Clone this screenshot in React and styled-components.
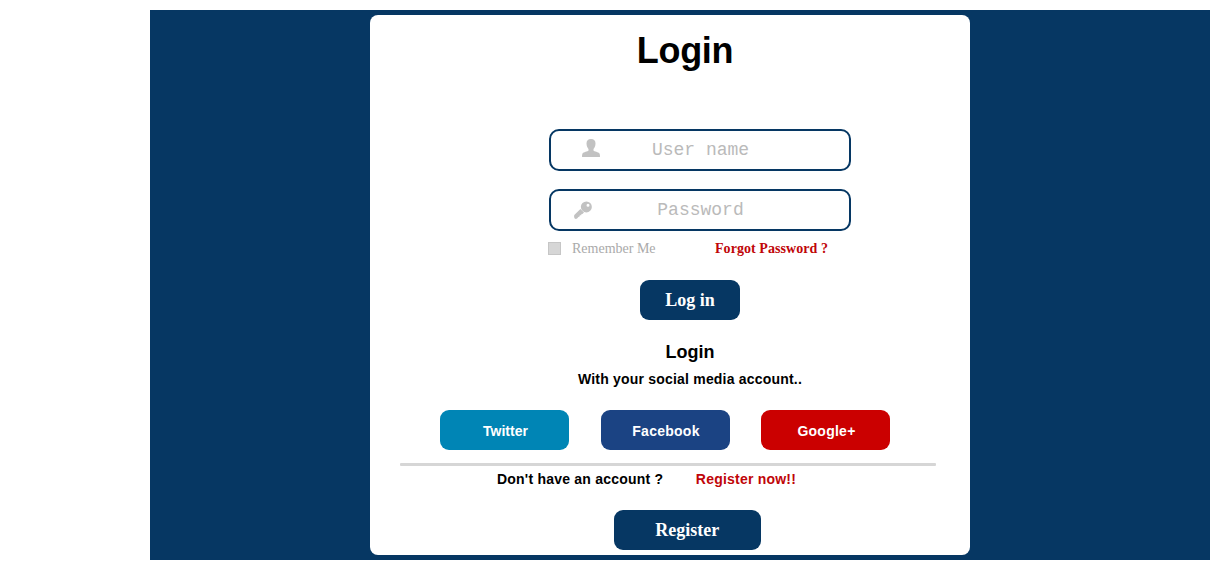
import React from 'react';
import styled, { createGlobalStyle } from 'styled-components';

const GlobalStyle = createGlobalStyle`
  *, *::before, *::after { box-sizing: border-box; }
  body { margin: 0; background: #fff; overflow: hidden; }
`;
const sans = '"Liberation Sans", Arial, sans-serif';
const serif = '"Liberation Serif", "Times New Roman", serif';
const mono = '"Liberation Mono", "Courier New", monospace';
const navy = '#063763';

const Page = styled.div`
  height: 580px;
  padding: 10px 20px 20px 150px;
`;
const Backdrop = styled.main`
  height: 550px;
  padding: 5px 240px 5px 220px;
  background: ${navy};
`;
const Card = styled.section`
  width: 600px;
  height: 540px;
  border-radius: 8px;
  background: #fff;
  display: flex;
  flex-direction: column;
`;
const Title = styled.h1`
  margin: 15px 0 0 30px;
  height: 99px;
  font: bold 36px/42px ${sans};
  letter-spacing: -0.3px;
  text-align: center;
  color: #000;
`;
const Form = styled.form`
  display: flex;
  flex-direction: column;
  gap: 18px;
  margin: 0 0 0 179px;
  width: 302px;
`;
const Field = styled.label`
  display: grid;
  height: 42px;
  border: 2px solid ${navy};
  border-radius: 10px;
  & > * { grid-area: 1 / 1; }
`;
const Input = styled.input`
  width: 100%;
  height: 38px;
  padding: 0 0 0 1px;
  border: 0;
  outline: 0;
  background: transparent;
  font: 18px ${mono};
  text-align: center;
  &::placeholder { color: #bababa; opacity: 1; }
`;
const FieldIcon = styled.svg`
  width: 18px;
  height: 18px;
  margin: ${p => p.$top}px 0 0 ${p => p.$left}px;
  fill: #c2c2c2;
`;
const Options = styled.div`
  display: flex;
  align-items: center;
  height: 16px;
  margin: 10px 0 0 178px;
  font: 14px/16px ${serif};
  white-space: nowrap;
`;
const Box = styled.span`
  width: 13px;
  height: 13px;
  margin-bottom: 2px;
  border: 1px solid #c6c6c6;
  background: #d6d6d6;
`;
const Remember = styled.span`
  width: 143px;
  margin-left: 11px;
  color: #aaa;
`;
const Forgot = styled.a`
  font-weight: bold;
  letter-spacing: 0.06px;
  color: #c00508;
`;
const Button = styled.button`
  width: ${p => p.$width}px;
  height: 40px;
  flex: none;
  padding: ${p => (p.$social ? '2px 0 0 2px' : '0')};
  border: 0;
  border-radius: 9px;
  background: ${p => p.$color || navy};
  color: #fff;
  font: ${p => (p.$social ? `bold 14px ${sans}` : `bold 18px ${serif}`)};
  letter-spacing: ${p => p.$tracking || 0}px;
`;
const SubmitRow = styled.div`
  display: flex;
  margin: ${p => p.$top}px 0 0 ${p => p.$left}px;
`;
const SubTitle = styled.h2`
  margin: 22px 0 0 40px;
  font: bold 18px/20px ${sans};
  text-align: center;
`;
const Caption = styled.p`
  margin: 9px 0 0 40px;
  font: bold 14px/16px ${sans};
  letter-spacing: 0.2px;
  text-align: center;
`;
const Socials = styled.div`
  display: grid;
  grid-template-columns: repeat(3, 129px);
  justify-content: space-between;
  width: 450px;
  margin: 23px 0 0 70px;
`;
const Divider = styled.hr`
  width: 536px;
  height: 3px;
  margin: 13px 0 0 30px;
  border: 0;
  border-radius: 1px;
  background: #d6d6d6;
`;
const SignUp = styled.div`
  display: flex;
  gap: 32.5px;
  margin: 5px 0 0 127px;
  font: bold 14px/16px ${sans};
  letter-spacing: 0.22px;
`;
const RegisterLink = styled.a`
  color: #c00508;
`;

export default function App() {
  return (
    <Page>
      <GlobalStyle />
      <Backdrop>
        <Card>
          <Title>Login</Title>
          <Form>
            <Field>
              <FieldIcon $top={8} $left={31} viewBox="0 0 18 18">
                <path d="M9 0C6 0 4.5 1.8 4.5 4.4C4.5 7 5.5 8.7 6.5 9.9V11.5C5.7 12.6 1.5 12.9.5 14.5C.1 15.3 0 16.5 0 17.4Q0 18 .6 18H17.4Q18 18 18 17.4C18 16.5 17.9 15.3 17.5 14.5C16.5 12.9 12.3 12.6 11.5 11.5V9.9C12.5 8.7 13.5 7 13.5 4.4C13.5 1.8 12 0 9 0Z" />
              </FieldIcon>
              <Input placeholder="User name" />
            </Field>
            <Field>
              <FieldIcon $top={10} $left={23} viewBox="0 0 18 18">
                <path fillRule="evenodd" d="M12.4.4A5.5 5.5 0 1 1 12.3 11.4A5.5 5.5 0 0 1 12.4.4ZM14 2.8A1.5 1.5 0 1 0 14 5.8A1.5 1.5 0 0 0 14 2.8Z" />
                <path d="M6.4 7.9L10 11.4L8.4 13L7.5 12.9L7.2 14.2L5.9 14.3L5.5 15.6L4.4 16L3.1 17.5Q1.8 18.4.7 17.5Q-.3 16.1.3 14.1Z" />
              </FieldIcon>
              <Input type="text" placeholder="Password" />
            </Field>
          </Form>
          <Options>
            <Box />
            <Remember>Remember Me</Remember>
            <Forgot>Forgot Password ?</Forgot>
          </Options>
          <SubmitRow $top={23} $left={270}>
            <Button $width={100}>Log in</Button>
          </SubmitRow>
          <SubTitle>Login</SubTitle>
          <Caption>With your social media account..</Caption>
          <Socials>
            <Button $social $width={129} $color="#0085b5">Twitter</Button>
            <Button $social $width={129} $color="#1b4383" $tracking={0.25}>Facebook</Button>
            <Button $social $width={129} $color="#cb0000" $tracking={0.25}>Google+</Button>
          </Socials>
          <Divider />
          <SignUp>
            <span>Don't have an account ?</span>
            <RegisterLink>Register now!!</RegisterLink>
          </SignUp>
          <SubmitRow $top={23} $left={243.5}>
            <Button $width={147.5}>Register</Button>
          </SubmitRow>
        </Card>
      </Backdrop>
    </Page>
  );
}
